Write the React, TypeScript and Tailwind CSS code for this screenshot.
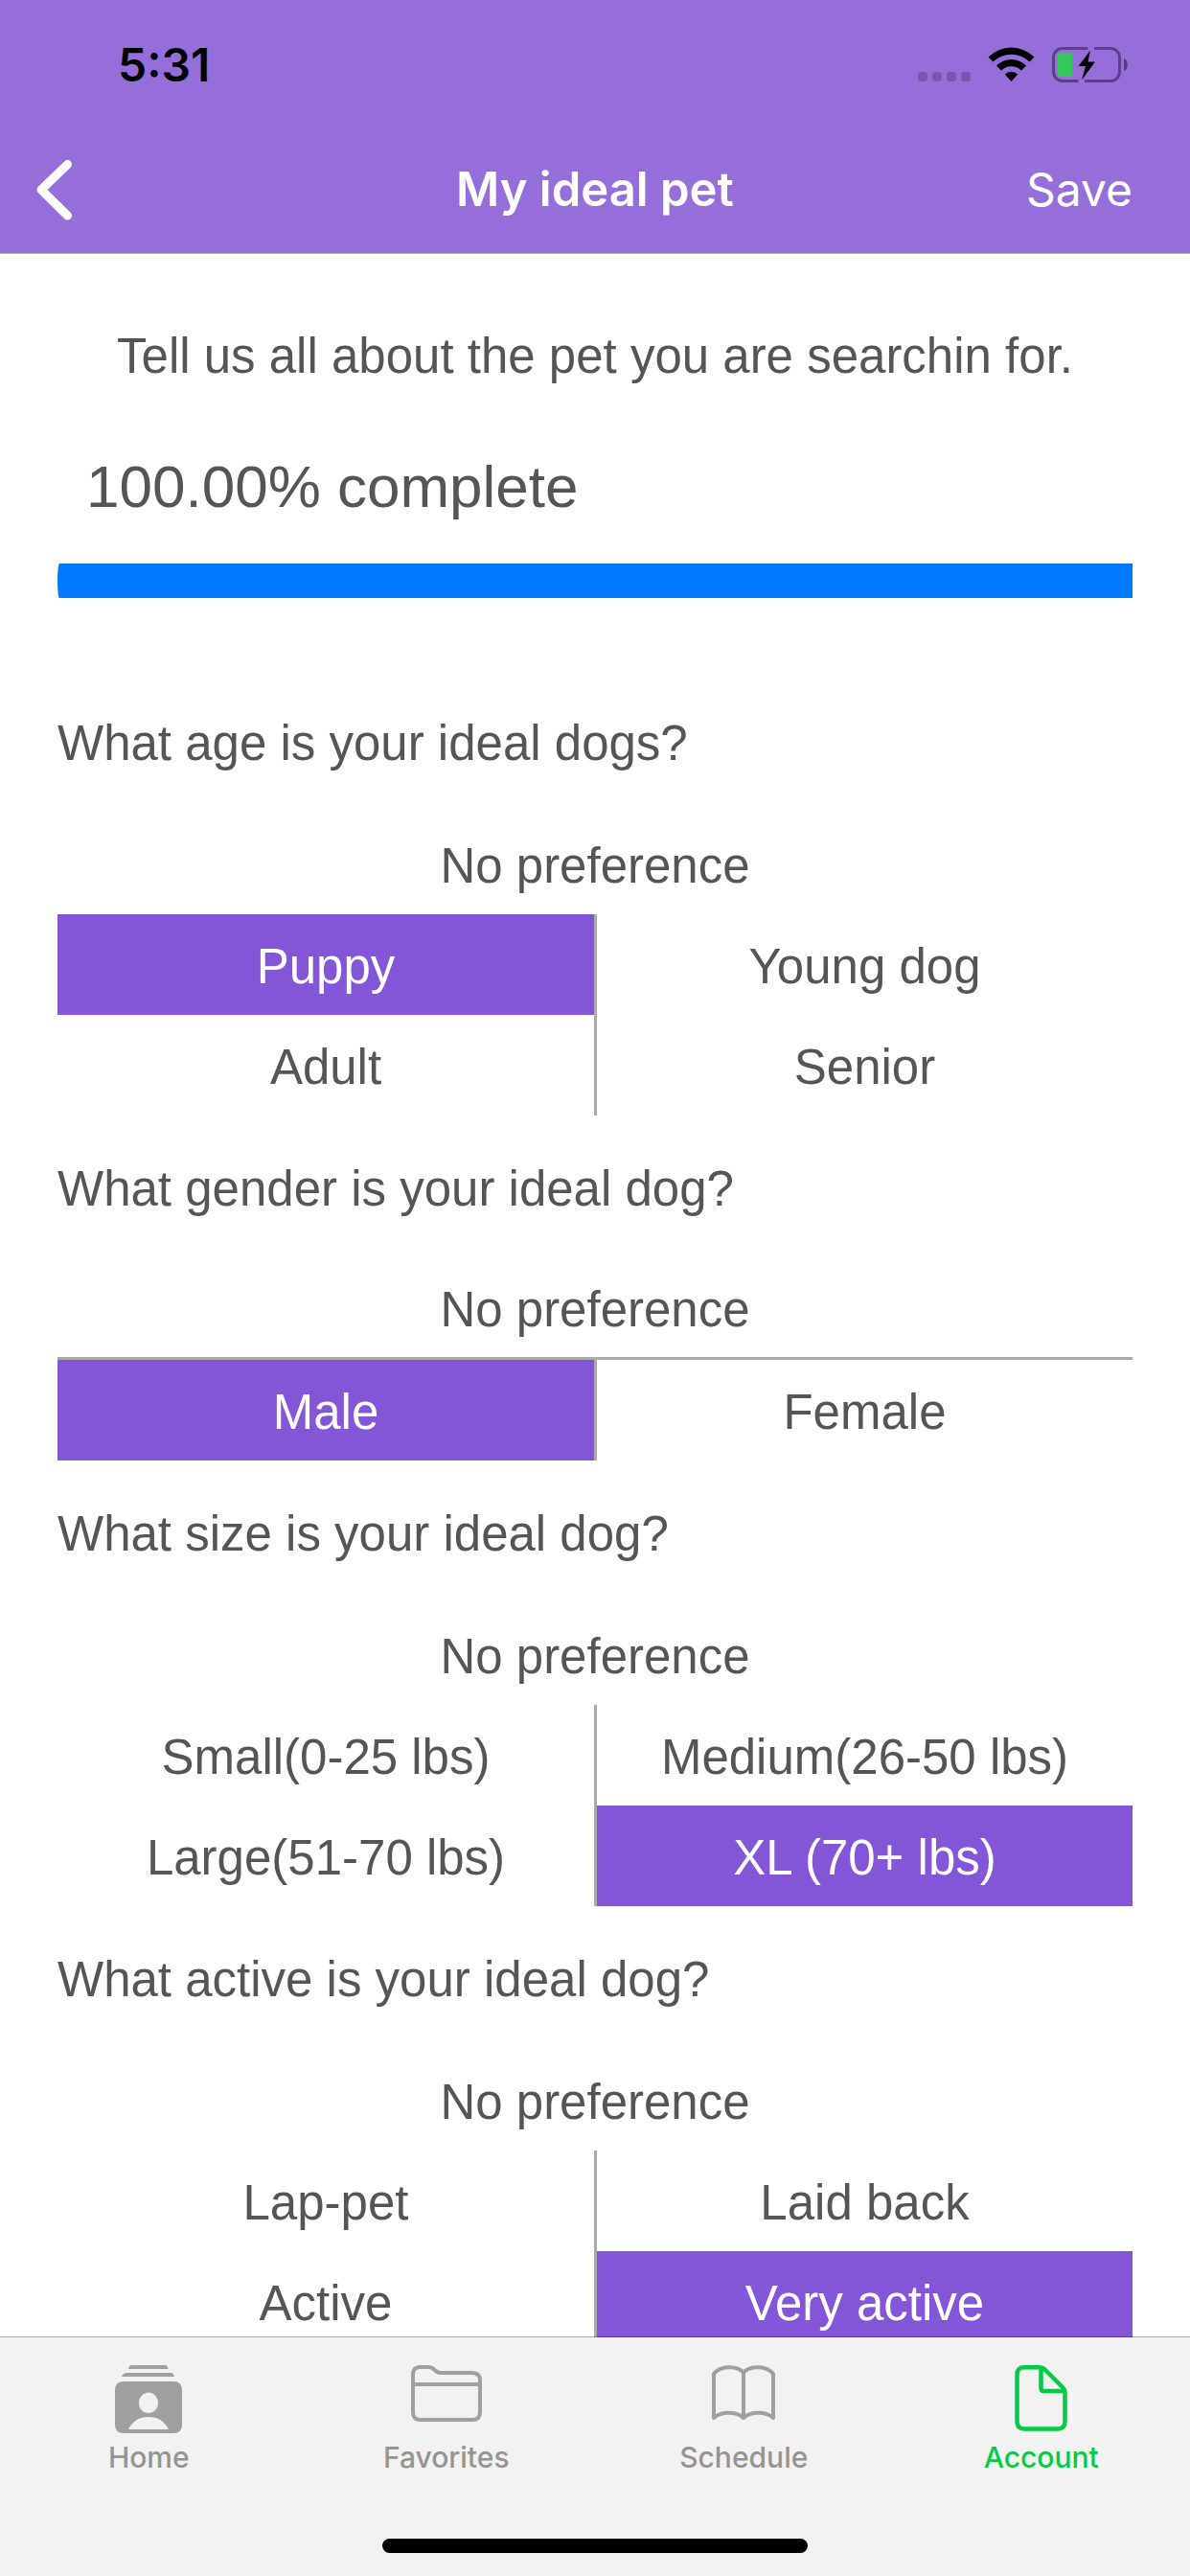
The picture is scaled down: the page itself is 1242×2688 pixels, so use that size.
import React, { useState } from "react";

type Question = {
  id: string;
  text: string;
  options: string[];
  initial: string;
  divided?: boolean;
};

const QUESTIONS: Question[] = [
  { id: "age", text: "What age is your ideal dogs?", options: ["Puppy", "Young dog", "Adult", "Senior"], initial: "Puppy" },
  { id: "gender", text: "What gender is your ideal dog?", options: ["Male", "Female"], initial: "Male", divided: true },
  { id: "size", text: "What size is your ideal dog?", options: ["Small(0-25 lbs)", "Medium(26-50 lbs)", "Large(51-70 lbs)", "XL (70+ lbs)"], initial: "XL (70+ lbs)" },
  { id: "active", text: "What active is your ideal dog?", options: ["Lap-pet", "Laid back", "Active", "Very active"], initial: "Very active" },
];

function StatusIcons() {
  return (
    <svg className="h-11 w-[222px]" viewBox="957 46 222 44" aria-hidden="true">
      <g fill="#000" fillOpacity=".2">
        <rect x="958" y="75" width="10" height="10" rx="3.5" />
        <rect x="973" y="75" width="10" height="10" rx="3.5" />
        <rect x="988" y="75" width="10" height="10" rx="3.5" />
        <rect x="1003" y="75" width="10" height="10" rx="3.5" />
      </g>
      <path d="M1031.500 59.500A34 34 0 0 1 1079.500 59.500L1074.500 64.500A27 27 0 0 0 1036.500 64.500Z" />
      <path d="M1040 68.500A22 22 0 0 1 1071 68.500L1066 73.500A15 15 0 0 0 1045 73.500Z" />
      <path d="M1048.800 77.500A9.500 9.500 0 0 1 1062.200 77.500L1055.500 85Z" />
      <path d="M1135.500 50.500H1109A9.500 9.500 0 0 0 1099.500 60V75A9.500 9.500 0 0 0 1109 84.500H1125.500M1132 84.500H1159A9.500 9.500 0 0 0 1168.500 75V60A9.500 9.500 0 0 0 1159 50.500H1142" fill="none" stroke="#000" strokeOpacity=".4" strokeWidth="3" />
      <path d="M1173 61C1178 62.500 1178 72.500 1173 74Z" fillOpacity=".45" />
      <rect x="1103.500" y="55" width="16" height="25" rx="4" fill="#34c759" />
      <path d="M1138 52.500L1125.500 69H1133L1129 83.500L1143 64.500H1135.500Z" />
    </svg>
  );
}

function HomeIcon() {
  return (
    <svg className="h-[72px] w-[70px]" viewBox="0 0 70 72" fill="currentColor" aria-hidden="true">
      <path d="M14 4Q14.500 0 18 0H52Q55 0 55.500 4Z" />
      <path d="M7 12Q8.500 8 12 8H58Q61 8 62 12Z" />
      <path fillRule="evenodd" d="M9 17H61Q70 17 70 26V62Q70 71 61 71H9Q0 71 0 62V26Q0 17 9 17ZM35 28.500C29.500 28.500 25 33.500 25 39.500S29.500 50 35 50S45 45.500 45 39.500S40.500 28.500 35 28.500ZM14 67H56C52 58.500 44.500 54 35 54S18 58.500 14 67Z" />
    </svg>
  );
}

function FavoritesIcon() {
  return (
    <svg className="h-[72px] w-[74px]" viewBox="0 0 74 72" fill="none" stroke="currentColor" strokeWidth="4" aria-hidden="true">
      <path d="M2 10Q2 2 9 2H18Q22 2 24.500 5Q27.500 8 31 8H64Q72 8 72 16V49Q72 57 64 57H10Q2 57 2 49ZM2 20H72" />
    </svg>
  );
}

function ScheduleIcon() {
  return (
    <svg className="h-[72px] w-[66px]" viewBox="0 0 66 72" fill="none" stroke="currentColor" strokeWidth="4" strokeLinejoin="round" aria-hidden="true">
      <path d="M33 7.500C26 .3 9 .3 2 9V55C9 48 26 48 33 55C40 48 57 48 64 55V9C57 .3 40 .3 33 7.500ZM33 7.500V55" />
    </svg>
  );
}

function AccountIcon() {
  return (
    <svg className="h-[72px] w-[55px]" viewBox="0 0 55 72" fill="none" stroke="currentColor" strokeWidth="4.500" strokeLinejoin="round" aria-hidden="true">
      <path d="M10 2.300H25Q29 2.300 32 5L50 23Q52.500 25.500 52.500 29V58.500Q52.500 66.500 45 66.500H10Q2.500 66.500 2.500 58.500V10Q2.500 2.300 10 2.300ZM27.500 3V24Q27.500 27 30.500 27H52" />
    </svg>
  );
}

const TABS = [
  { label: "Home", Icon: HomeIcon },
  { label: "Favorites", Icon: FavoritesIcon },
  { label: "Schedule", Icon: ScheduleIcon },
  { label: "Account", Icon: AccountIcon },
];

function QuestionBlock({ question }: { question: Question }) {
  const [value, setValue] = useState(question.initial);
  return (
    <section aria-labelledby={question.id}>
      <h2 id={question.id} className="flex h-[150px] items-center pt-1">
        {question.text}
      </h2>
      <button
        type="button"
        aria-pressed={value === "No preference"}
        onClick={() => setValue("No preference")}
        className={
          (question.divided ? "border-b-3 border-[#aaaaaa] " : "") +
          (value === "No preference" ? "bg-[#8256d6] text-white " : "") +
          "flex h-[105px] w-full items-center justify-center pt-1"
        }
      >
        No preference
      </button>
      <div className="grid grid-cols-2">
        {question.options.map((option, i) => (
          <button
            key={option}
            type="button"
            aria-pressed={value === option}
            onClick={() => setValue(option)}
            className={
              (i % 2 === 0 ? "-mr-0.5 border-r-3 border-[#aaaaaa] " : "ml-0.5 ") +
              (value === option ? "bg-[#8256d6] text-white " : "") +
              "flex h-[105px] items-center justify-center pt-1"
            }
          >
            {option}
          </button>
        ))}
      </div>
    </section>
  );
}

export default function App() {
  return (
    <div className="flex h-screen flex-col bg-white font-['Liberation_Sans',Arial,sans-serif] text-[51px] leading-[60px] text-[#555555]">
      <header className="relative shrink-0 bg-[#956eda] font-[Inter,sans-serif] shadow-[0_1px_0_rgba(0,0,0,0.3)]">
        <div className="flex h-[132px] items-center justify-between pt-1 pr-[63px] pl-[123px] text-black">
          <span className="text-[48px] font-semibold">5:31</span>
          <StatusIcons />
        </div>
        <div className="grid h-[132px] grid-cols-[1fr_auto_1fr] items-center px-[60px] text-[49px] text-white">
          <button type="button" aria-label="Back" className="-ml-6 justify-self-start">
            <svg className="h-[66px] w-10" viewBox="0 0 40 66" fill="none" stroke="currentColor" strokeWidth="9" strokeLinecap="round" strokeLinejoin="round" aria-hidden="true">
              <path d="M34.500 6.500L7 33L34.500 60" />
            </svg>
          </button>
          <h1 className="font-semibold">My ideal pet</h1>
          <button type="button" className="justify-self-end text-[48px]">Save</button>
        </div>
      </header>

      <main className="min-h-0 flex-1 overflow-y-auto px-[60px] pt-[78px] [scrollbar-width:none]">
        <p className="text-center">Tell us all about the pet you are searchin for.</p>
        <p className="mt-[70px] pl-[30px] text-[62px] leading-[72px]">100.00% complete</p>
        <div
          role="progressbar"
          aria-label="Profile completion"
          aria-valuenow={100}
          aria-valuemin={0}
          aria-valuemax={100}
          className="mt-11 mb-[75px] h-9 rounded-tl-[2px_18px] rounded-bl-[2px_18px] bg-[#007aff]"
        />
        {QUESTIONS.map((q) => (
          <QuestionBlock key={q.id} question={q} />
        ))}
      </main>

      <footer className="relative flex h-[249px] shrink-0 flex-col items-center bg-[#f2f2f2] shadow-[0_-1px_0_rgba(0,0,0,0.3)]">
        <nav className="grid w-full grid-cols-4 pt-[29px] font-[Inter,sans-serif] text-[30px] leading-9 font-medium">
          {TABS.map(({ label, Icon }) => (
            <a
              key={label}
              href={"#" + label.toLowerCase()}
              aria-current={label === "Account" ? "page" : undefined}
              className="flex flex-col items-center gap-1.5"
            >
              <span className={label === "Account" ? "text-[#04cb44]" : "text-[#a0a0a0]"}>
                <Icon />
              </span>
              <span className={label === "Account" ? "text-[#04cb44]" : "text-[#949494]"}>{label}</span>
            </a>
          ))}
        </nav>
        <div className="mt-auto mb-6 h-[15px] w-[444px] rounded-full bg-black" />
      </footer>
    </div>
  );
}
